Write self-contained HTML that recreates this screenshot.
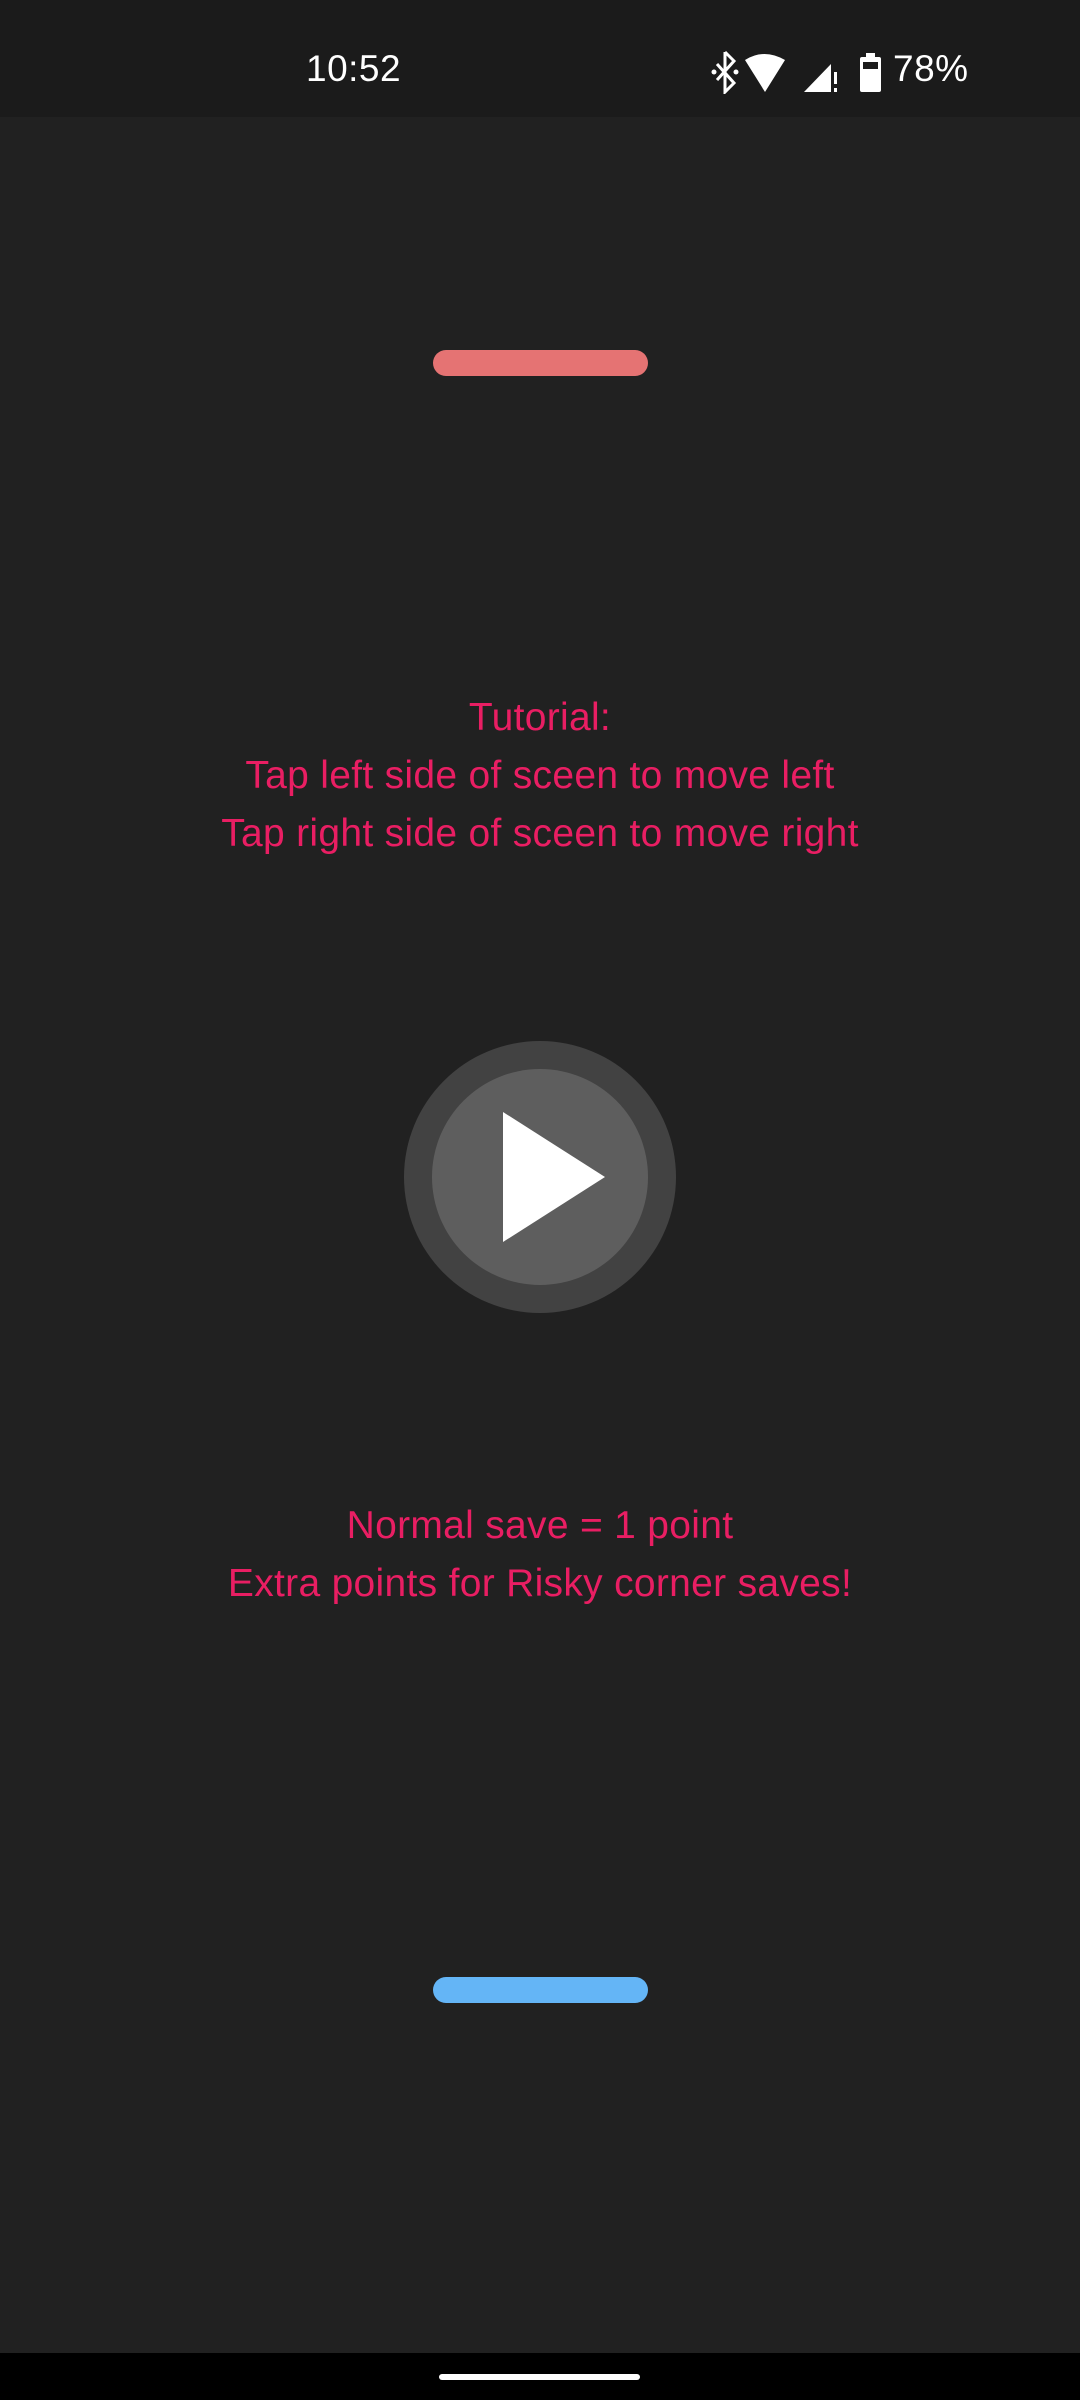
<!DOCTYPE html>
<html><head><meta charset="utf-8"><style>
html,body{margin:0;padding:0}
body{width:1080px;height:2400px;background:#212121;position:relative;overflow:hidden;font-family:"Liberation Sans",sans-serif}
.sb{position:absolute;left:0;top:0;width:1080px;height:117px;background:#1b1b1b}
.t{position:absolute;color:#fff;font-size:37px;top:48px;letter-spacing:0.5px}
.txt{position:absolute;left:0;width:1080px;text-align:center;color:#e91e63;font-size:39px;line-height:58px;letter-spacing:0.3px}
.pad{position:absolute;left:433px;width:215px;height:26px;border-radius:13px}
</style></head><body>
<div class="sb"></div>
<div class="t" style="left:306px">10:52</div>
<svg style="position:absolute;left:700px;top:50px" width="280" height="44" viewBox="0 0 280 44">
 <g stroke="#fff" stroke-width="3" fill="none">
  <path d="M25 2 L25 42 L34 33 L17 14 M25 2 L34 11 L17 30"/>
 </g>
 <circle cx="14" cy="22" r="2.5" fill="#fff"/><circle cx="36" cy="22" r="2.5" fill="#fff"/>
 <path d="M65 42 L45 10 Q64 -2 85 10 Z" fill="#fff"/>
 <path d="M104 42 L131 42 L131 14 Z" fill="#fff"/>
 <rect x="134" y="22" width="3" height="12" fill="#fff"/><rect x="134" y="38" width="3" height="4" fill="#fff"/>
 <rect x="160" y="7" width="21" height="35" rx="2" fill="#fff"/><rect x="166" y="3" width="9" height="5" fill="#fff"/>
 <rect x="163" y="12" width="15" height="7" fill="#1b1b1b"/>
</svg>
<div class="t" style="left:893px">78%</div>
<div class="pad" style="top:350px;background:#e57373"></div>
<div class="txt" style="top:689px">Tutorial:<br>Tap left side of sceen to move left<br>Tap right side of sceen to move right</div>
<svg style="position:absolute;left:400px;top:1037px" width="280" height="280" viewBox="0 0 280 280">
 <circle cx="140" cy="140" r="136" fill="#424242"/>
 <circle cx="140" cy="140" r="108" fill="#5e5e5e"/>
 <path d="M103 75 L205 140 L103 205 Z" fill="#fff"/>
</svg>
<div class="txt" style="top:1497px">Normal save = 1 point<br>Extra points for Risky corner saves!</div>
<div class="pad" style="top:1977px;background:#64b5f6"></div>
<div style="position:absolute;left:0;top:2353px;width:1080px;height:47px;background:#000"></div>
<div style="position:absolute;left:439px;top:2374px;width:201px;height:6px;border-radius:3px;background:#fff"></div>
</body></html>
